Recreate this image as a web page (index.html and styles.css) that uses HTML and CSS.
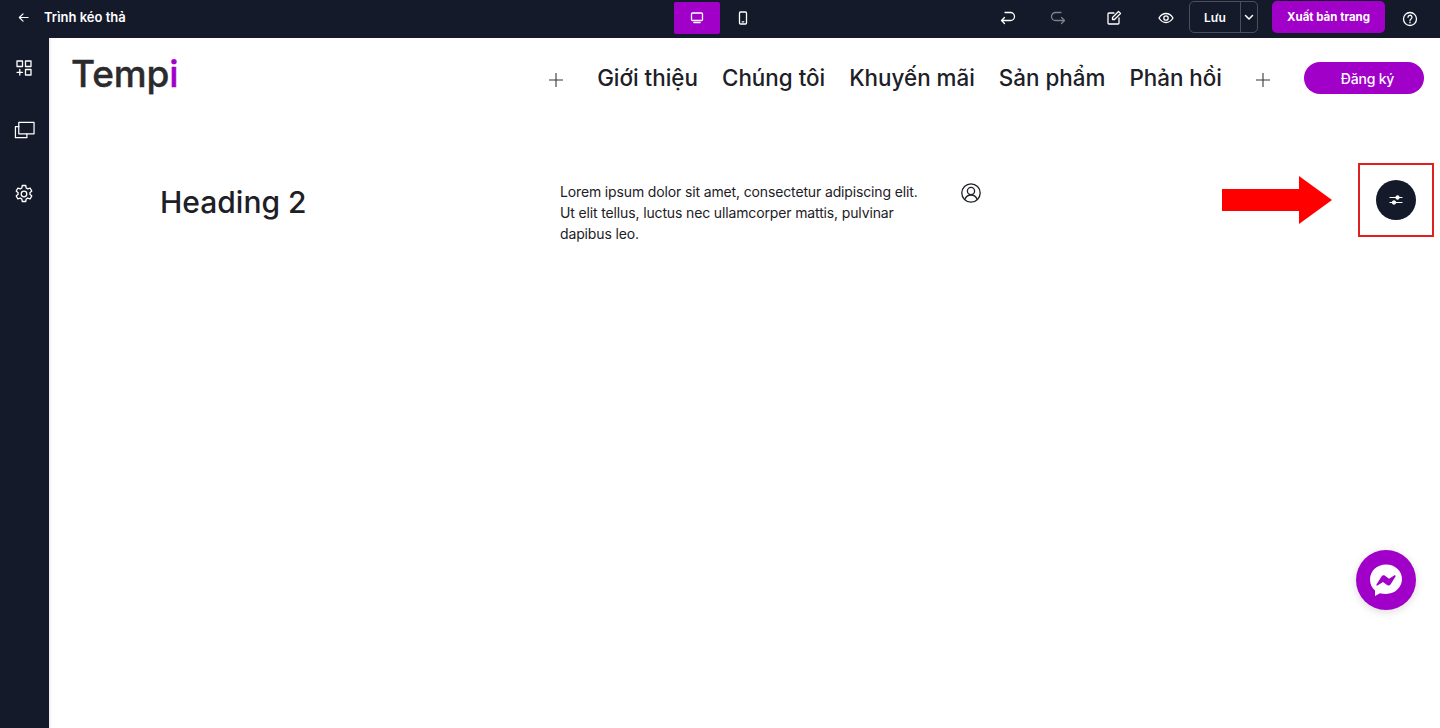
FILE: index.html
```html
<!DOCTYPE html>
<html lang="vi">
<head>
<meta charset="utf-8">
<title>Trình kéo thả</title>
<link rel="stylesheet" href="styles.css">
</head>
<body>
<header class="topbar">
  <div class="tb-left">
    <svg class="ic back" viewBox="0 0 12 12"><path d="M11 6H1.500M5.500 2 1.500 6l4 4"/></svg>
    <span class="tb-title">Trình kéo thả</span>
  </div>
  <div class="tb-center">
    <button class="dev active"><svg class="ic" width="14" height="14" viewBox="0 0 14 14"><rect x="1.500" y="2" width="11" height="7.500" rx="1"/><path d="M4 11.500h6" stroke-width="1.600"/></svg></button>
    <button class="dev"><svg class="ic" width="14" height="14" viewBox="0 0 14 14"><rect x="3.500" y="1" width="7" height="12" rx="1"/><path d="M6.200 10.800h1.600"/></svg></button>
  </div>
  <div class="tb-right">
    <svg class="ic tool undo" viewBox="0 0 16 16"><path d="M5 2.500h5.500a4 4 0 0 1 0 8H1.500M4.500 7.500l-3 3 3 3"/></svg>
    <svg class="ic tool redo" viewBox="0 0 16 16"><path d="M11 2.500H5.500a4 4 0 0 0 0 8h9M11.500 7.500l3 3-3 3"/></svg>
    <svg class="ic tool edit" viewBox="0 0 16 16"><path d="M8 3H3a1 1 0 0 0-1 1v9a1 1 0 0 0 1 1h9a1 1 0 0 0 1-1V8"/><path d="M6.500 9.500V7.500L12.500 1.500l2 2-6 6z"/></svg>
    <svg class="ic tool eye" viewBox="0 0 16 16"><path d="M1 8c1.800-3 4-4.500 7-4.500S13.200 5 15 8c-1.800 3-4 4.500-7 4.500S2.800 11 1 8z"/><circle cx="8" cy="8" r="2.200"/></svg>
    <div class="save">
      <span class="save-label">Lưu</span>
      <span class="save-caret"><svg class="ic" width="10" height="10" viewBox="0 0 10 10"><path d="M1.500 3.500 5 7l3.500-3.500" stroke-width="1.500"/></svg></span>
    </div>
    <button class="publish">Xuất bản trang</button>
    <svg class="ic tool help" viewBox="0 0 16 16"><circle cx="8" cy="8" r="6.500"/><path d="M6 6.300a2 2 0 1 1 3 1.700c-.7.400-1 .8-1 1.500M8 11.200v.6"/></svg>
  </div>
</header>
<div class="workspace">
  <aside class="sidebar">
    <svg class="ic side" viewBox="0 0 16 16"><rect x="1" y="1" width="5.500" height="5.500"/><rect x="9.500" y="1" width="5.500" height="5.500"/><rect x="9.500" y="9.500" width="5.500" height="5.500"/><path d="M3.800 9.500v5.500M1 12.300h5.500"/></svg>
    <svg class="ic side copy" viewBox="0 0 22 18"><rect x="5" y="1" width="16" height="12"/><path d="M5 5.500H1.500V17h12v-4"/></svg>
    <svg class="ic side gear" viewBox="0 0 20 20"><circle cx="10" cy="10" r="2.800"/><path d="M8.300 1.500h3.400l.5 2.500 1.500.9 2.400-.8 1.700 2.900-1.900 1.700v1.600l1.900 1.700-1.700 2.900-2.400-.8-1.500.9-.5 2.500H8.300l-.5-2.500-1.500-.9-2.400.8-1.700-2.900 1.900-1.700V8.700L2.200 7l1.700-2.900 2.400.8 1.500-.9z"/></svg>
  </aside>
  <main class="canvas">
    <nav class="site-nav">
      <div class="logo">Temp<span class="logo-i">i</span></div>
      <div class="menu">
        <svg class="plus" viewBox="0 0 14 14"><path d="M7 0v14M0 7h14"/></svg>
        <a class="link first">Giới thiệu</a>
        <a class="link">Chúng tôi</a>
        <a class="link">Khuyến mãi</a>
        <a class="link">Sản phẩm</a>
        <a class="link">Phản hồi</a>
        <svg class="plus last" viewBox="0 0 14 14"><path d="M7 0v14M0 7h14"/></svg>
        <button class="signup">Đăng ký</button>
      </div>
    </nav>
    <section class="row">
      <h2 class="heading">Heading 2</h2>
      <p class="copy-text">Lorem ipsum dolor sit amet, consectetur adipiscing elit. Ut elit tellus, luctus nec ullamcorper mattis, pulvinar dapibus leo.</p>
      <svg class="user" viewBox="0 0 20 20"><circle cx="10" cy="10" r="9.200"/><circle cx="10" cy="8" r="3.600"/><path d="M3.900 16.500c1-2.900 3.200-4.500 6.100-4.500s5.100 1.600 6.100 4.500"/></svg>
    </section>
    <svg class="arrow" viewBox="0 0 110 48"><path d="M0 13h77V0l33 24-33 24V35H0z"/></svg>
    <div class="mark"><span class="dot"><svg class="ic" width="14" height="14" viewBox="0 0 14 14"><path d="M1 4.500h12M1 9.500h12" stroke-width="1.200"/><circle cx="8.500" cy="4.500" r="1.500" fill="#fff"/><circle cx="5" cy="9.500" r="1.500" fill="#fff"/></svg></span></div>
    <div class="chat"><svg width="34" height="34" viewBox="0 0 34 34"><path class="bubble" d="M17 1.500C8 1.500 1 8.100 1 16.600c0 4.500 1.900 8.300 5 11v5.400l5-2.800c1.800.5 3.800.8 6 .8 9 0 16-6.600 16-14.900S26 1.500 17 1.500z"/><path class="bolt" d="M7.500 21.500 12.500 13.500c.8-1.200 2.400-1.500 3.500-.7l4 3 5.500-3.500c.7-.4 1.500.4 1 1.100l-5 8c-.8 1.200-2.400 1.500-3.500.7l-4-3-5.500 3.500c-.7.400-1.500-.4-1-1.100z"/></svg></div>
  </main>
</div>
</body>
</html>
```
FILE: styles.css
```css
* { box-sizing: border-box; }
html, body { margin: 0; height: 100%; }
body { height: 728px; overflow: hidden; font-family: Inter, "Liberation Sans", sans-serif; color: #1d2026; background: #141a2a; }
button { font-family: inherit; border: 0; padding: 0; cursor: pointer; }
.ic { fill: none; stroke: #fff; stroke-width: 1.300; stroke-linecap: round; stroke-linejoin: round; display: block; flex: none; }

.topbar { height: 38px; display: grid; grid-template-columns: 1fr auto 1fr; background: #141a2a; color: #fff; }
.tb-left { display: flex; align-items: center; padding: 0 0 4px 18px; }
.back { width: 11px; height: 11px; margin-right: 15px; }
.tb-title { font-size: 13px; font-weight: 600; }
.tb-center { display: flex; height: 34px; margin-top: 2px; }
.dev { width: 46px; height: 32px; background: transparent; display: flex; align-items: center; justify-content: center; border-radius: 2px; }
.dev.active { background: #a100c8; }
.tb-right { display: flex; align-items: center; justify-content: flex-end; padding: 0 22px 4px 0; }
.tool { width: 16px; height: 16px; }
.undo { margin-right: 34px; margin-top: 2px; }
.redo { margin-right: 40px; margin-top: 2px; opacity: .45; }
.edit { margin-right: 36px; margin-top: 2px; }
.eye { margin-right: 15px; margin-top: 2px; }
.save { width: 69px; height: 32px; display: flex; border: 1px solid #4a4f5c; border-radius: 5px; margin-right: 14px; }
.save-label { width: 51px; display: flex; align-items: center; justify-content: center; font-size: 12px; font-weight: 600; border-right: 1px solid #4a4f5c; }
.save-caret { flex: 1; display: flex; align-items: center; justify-content: center; }
.publish { width: 113px; height: 32px; background: #a100c8; border-radius: 5px; color: #fff; font-size: 11.500px; font-weight: 700; margin-right: 17px; }
.help { margin-top: 4px; }

.workspace { display: flex; height: 690px; }
.sidebar { width: 49px; flex: none; display: flex; flex-direction: column; align-items: center; padding: 22px 0 0 0; }
.side { width: 16px; height: 16px; margin-right: 1px; }
.side.copy { width: 21px; height: 18px; margin-top: 45px; }
.side.gear { width: 20px; height: 20px; margin-top: 45px; }
.canvas { position: relative; flex: 1; background: #fff; box-shadow: inset 3px 0 3px -2px rgba(0,0,0,.1); }

.site-nav { display: flex; justify-content: space-between; align-items: flex-start; height: 126px; padding: 24px 16px 0 22px; }
.logo { font-size: 37px; line-height: 28px; font-weight: 500; letter-spacing: -.1px; color: #2b2b2e; -webkit-text-stroke: .4px #2b2b2e; margin-top: -2px; }
.logo-i { color: #a100c8; -webkit-text-stroke-color: #a100c8; }
.menu { display: flex; align-items: center; height: 32px; }
.plus { width: 14px; height: 14px; fill: none; stroke: #33373f; stroke-width: 1.100; margin-top: 3px; }
.link { font-size: 22.400px; font-weight: 500; white-space: nowrap; margin: -2px 0 0 24px; color: #1d2026; }
.link.first { margin-left: 34px; }
.plus.last { margin-left: 34px; }
.signup { width: 120px; height: 32px; margin-left: 34px; padding-left: 7px; background: #a100c8; color: #fff; border-radius: 16px; font-size: 14px; font-weight: 500; letter-spacing: -.2px; }

.row { display: grid; grid-template-columns: 400px 401px 20px; padding: 0 0 0 111px; }
.heading { margin: 0; padding-top: 18px; font-size: 30px; line-height: 40px; font-weight: 500; color: #1d2026; }
.copy-text { margin: 0; padding-top: 17px; width: 370px; font-size: 14px; line-height: 21px; letter-spacing: -.14px; color: #1d2026; }
.user { width: 20px; height: 20px; margin-top: 19px; fill: none; stroke: #1d2026; stroke-width: 1.300; }

.arrow { position: absolute; left: 1173px; top: 138px; width: 110px; height: 48px; fill: #ff0000; }
.mark { position: absolute; left: 1309px; top: 125px; width: 76px; height: 74px; border: 2px solid #e02020; display: flex; align-items: center; justify-content: center; }
.dot { width: 40px; height: 40px; border-radius: 50%; background: #141a2a; display: flex; align-items: center; justify-content: center; }
.chat { position: absolute; left: 1307px; top: 512px; width: 60px; height: 60px; border-radius: 50%; background: #a100c8; display: flex; align-items: center; justify-content: center; box-shadow: 0 2px 8px rgba(0,0,0,.15); }
.bubble { fill: #fff; }
.bolt { fill: #a100c8; }
```
